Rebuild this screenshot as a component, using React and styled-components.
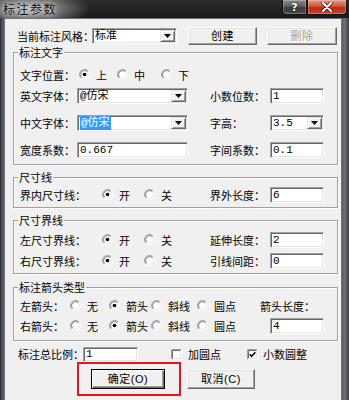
import React from "react";
import styled, { createGlobalStyle } from "styled-components";

const Global = createGlobalStyle`
  html, body { margin: 0; padding: 0; background: #f0f0f0; }
  body { font-family: "Noto Sans CJK SC", "Noto Sans", sans-serif; }
  #root { width: 349px; height: 400px; }
  * { box-sizing: border-box; }
`;

const Window = styled.div`
  width: 349px;
  height: 400px;
  overflow: hidden;
  display: flex;
  flex-direction: column;
  font-family: "Noto Sans CJK SC", sans-serif;
  font-size: 11px;
  color: #000;
  background: #3b3e44;
`;

const TitleBar = styled.div`
  height: 18px;
  flex: none;
  display: flex;
  align-items: flex-start;
  background:
    radial-gradient(ellipse 62px 20px at 28px 9px, rgba(200,200,200,0.95) 0%, rgba(150,150,150,0.7) 50%, rgba(40,40,40,0) 100%),
    linear-gradient(180deg, #2c2c2c, #1b1b1b);
`;

const Title = styled.div`
  padding: 1px 0 0 3px;
  font-size: 12px;
  line-height: 16px;
  letter-spacing: 1.5px;
  color: #0d0d0d;
  text-shadow: 0 0 3px #e0e0e0, 0 0 6px #cfcfcf;
`;

const CaptionButtons = styled.div`
  margin-left: auto;
  margin-right: 2px;
  display: flex;
`;

const CapBtn = styled.div`
  width: ${(p) => p.$w}px;
  height: 15px;
  display: flex;
  align-items: center;
  justify-content: center;
  color: #fff;
  font-family: "DejaVu Sans", sans-serif;
  font-weight: bold;
  font-size: 11px;
  border: 1px solid #111;
  border-top: none;
  box-shadow: inset 0 0 0 1px rgba(255,255,255,0.25);
  background: ${(p) =>
    p.$close
      ? "linear-gradient(180deg, #e49a88 0%, #d0533c 45%, #b72c17 55%, #c8442c 100%)"
      : "linear-gradient(180deg, #8c8c8c 0%, #5c5c5c 45%, #3a3a3a 55%, #4a4a4a 100%)"};
  border-radius: ${(p) => (p.$close ? "0 0 4px 0" : "0 0 0 4px")};
  text-shadow: 0 0 2px #000;
`;

const Frame = styled.div`
  flex: 1;
  display: flex;
  min-height: 0;
  padding: 0 7px 0 4px;
  background: linear-gradient(90deg, #2c2f33 0, #5a5f66 3px, #5a5f66 calc(100% - 7px), #6b7077 calc(100% - 4px), #3a3d42 100%);
`;

const Body = styled.div`
  flex: 1;
  background: #f0f0f0;
  border-top: 1px solid #6e737a;
  border-left: 1px solid #6e737a;
  border-right: 1px solid #6e737a;
  padding: 8px 3px 0 8px;
  display: flex;
  flex-direction: column;
`;

const Row = styled.div`
  display: flex;
  align-items: center;
  height: ${(p) => p.$h || 17}px;
  margin-top: ${(p) => p.$mt || 0}px;
  padding-left: ${(p) => p.$pl || 0}px;
  flex: none;
`;

const Label = styled.div`
  width: ${(p) => p.$w}px;
  flex: none;
  white-space: nowrap;
  line-height: 12px;
  margin-left: ${(p) => (p.$auto ? "auto" : "0")};
`;

const sunken = `
  background: #fff;
  border: 1px solid;
  border-color: #a0a0a0 #fff #fff #a0a0a0;
  box-shadow: inset 1px 1px 0 #696969, inset -1px -1px 0 #e3e3e3;
`;

const Field = styled.div`
  ${sunken}
  width: ${(p) => p.$w}px;
  height: ${(p) => p.$h || 16}px;
  flex: none;
  display: flex;
  align-items: center;
  padding: 0 2px 0 2px;
  margin-left: ${(p) => (p.$auto ? "auto" : p.$ml ? p.$ml + "px" : "0")};
  font-family: "Liberation Mono", "Noto Sans CJK SC", monospace;
  font-size: 11px;
  line-height: 12px;
  white-space: nowrap;
  overflow: hidden;
`;

const SelectField = styled(Field)`
  padding-right: 0;
`;

const Value = styled.span`
  flex: 1;
  min-width: 0;
`;

const Highlight = styled.span`
  background: #3399ff;
  color: #fff;
  padding: 1px 1px;
`;

const DropBtn = styled.div`
  width: 15px;
  height: 12px;
  margin-right: 1px;
  flex: none;
  display: flex;
  align-items: center;
  justify-content: center;
  background: #f0f0f0;
  border: 1px solid;
  border-color: #e3e3e3 #696969 #696969 #e3e3e3;
  box-shadow: inset 1px 1px 0 #fff, inset -1px -1px 0 #a0a0a0;
`;

const Button = styled.div`
  width: ${(p) => p.$w}px;
  height: ${(p) => p.$h || 18}px;
  flex: none;
  margin-left: ${(p) => p.$ml || 0}px;
  display: flex;
  align-items: center;
  justify-content: center;
  background: #f0f0f0;
  border: 1px solid;
  border-color: ${(p) => (p.$default ? "#000" : "#fff #696969 #696969 #fff")};
  box-shadow: ${(p) =>
    p.$default
      ? "inset 1px 1px 0 #fff, inset -1px -1px 0 #696969, inset -2px -2px 0 #a0a0a0"
      : "inset -1px -1px 0 #a0a0a0, inset 1px 1px 0 #e3e3e3"};
  color: ${(p) => (p.$disabled ? "#a0a0a0" : "#000")};
  text-shadow: ${(p) => (p.$disabled ? "1px 1px 0 #fff" : "none")};
  font-family: "Liberation Sans", "Noto Sans CJK SC", sans-serif;
  font-size: 11px;
  line-height: 12px;
  letter-spacing: 0.5px;
`;

const Group = styled.fieldset`
  margin: ${(p) => p.$mt}px 0 0 0;
  padding: ${(p) => p.$pt}px 13px ${(p) => p.$pb}px 6px;
  border: 1px solid #a0a0a0;
  box-shadow: 1px 1px 0 #fff, inset 1px 1px 0 #fff;
  min-width: 0;
  flex: none;
`;

const Legend = styled.legend`
  padding: 0 1px;
  margin-left: -2px;
  font-size: 11px;
  line-height: 12px;
  background: #f0f0f0;
`;

const Choice = styled.label`
  width: ${(p) => (p.$w ? p.$w + "px" : "auto")};
  flex: none;
  display: flex;
  align-items: center;
  gap: ${(p) => p.$gap || 6}px;
  line-height: 12px;
  white-space: nowrap;
`;

const Boxed = styled.div`
  margin-left: ${(p) => p.$ml}px;
  width: 104px;
  height: 34px;
  border: 2px solid #e8141c;
  padding: 5px 0 0 12px;
  flex: none;
`;

function RadioIcon({ on }) {
  return (
    <svg width="11" height="11" viewBox="0 0 12 12">
      <circle cx="6" cy="6" r="5" fill="#fff" />
      <path d="M2.11 9.89 A5.5 5.5 0 0 1 9.89 2.11" fill="none" stroke="#a0a0a0" strokeWidth="1" />
      <path d="M2.82 9.18 A4.5 4.5 0 0 1 9.18 2.82" fill="none" stroke="#696969" strokeWidth="1" />
      <path d="M9.89 2.11 A5.5 5.5 0 0 1 2.11 9.89" fill="none" stroke="#ffffff" strokeWidth="1" />
      <path d="M9.18 2.82 A4.5 4.5 0 0 1 2.82 9.18" fill="none" stroke="#e3e3e3" strokeWidth="1" />
      {on && <circle cx="6" cy="6" r="2" fill="#000" />}
    </svg>
  );
}

function CheckIcon({ on }) {
  return (
    <svg width="11" height="11" viewBox="0 0 11 11">
      <rect x="0" y="0" width="11" height="11" fill="#fff" />
      <path d="M0.5 10.5 V0.5 H10.5" fill="none" stroke="#a0a0a0" />
      <path d="M1.5 9.5 V1.5 H9.5" fill="none" stroke="#696969" />
      <path d="M10.5 0.5 V10.5 H0.5" fill="none" stroke="#fff" />
      <path d="M9.5 1.5 V9.5 H1.5" fill="none" stroke="#e3e3e3" />
      {on && <path d="M2.8 5.2 L4.6 7.2 L8.3 3.2" fill="none" stroke="#000" strokeWidth="1.6" />}
    </svg>
  );
}

function Arrow() {
  return (
    <svg width="7" height="4" viewBox="0 0 7 4">
      <path d="M0 0 H7 L3.5 4 Z" fill="#000" />
    </svg>
  );
}

function CloseGlyph() {
  return (
    <svg width="12" height="10" viewBox="0 0 12 10">
      <path d="M2 1 L10 9 M10 1 L2 9" stroke="#3a0a05" strokeWidth="3.2" strokeLinecap="round" />
      <path d="M2 1 L10 9 M10 1 L2 9" stroke="#fff" strokeWidth="2" strokeLinecap="round" />
    </svg>
  );
}

const Radio = ({ w, on, children }) => (
  <Choice $w={w}>
    <RadioIcon on={on} />
    <span>{children}</span>
  </Choice>
);

const Check = ({ w, on, children, gap }) => (
  <Choice $w={w} $gap={gap}>
    <CheckIcon on={on} />
    <span>{children}</span>
  </Choice>
);

const Select = ({ w, children }) => (
  <SelectField $w={w}>
    <Value>{children}</Value>
    <DropBtn>
      <Arrow />
    </DropBtn>
  </SelectField>
);

export default function App() {
  return (
    <>
      <Global />
      <Window>
        <TitleBar>
          <Title>标注参数</Title>
          <CaptionButtons>
            <CapBtn $w={25}>?</CapBtn>
            <CapBtn $w={40} $close>
              <CloseGlyph />
            </CapBtn>
          </CaptionButtons>
        </TitleBar>
        <Frame>
          <Body>
            <Row $h={18} $pl={4}>
              <Label $w={75}>当前标注风格：</Label>
              <Select w={85}>标准</Select>
              <Button $w={69} $ml={11}>创建</Button>
              <Button $w={70} $ml={10} $disabled>删除</Button>
            </Row>

            <Group $mt={1} $pt={8} $pb={6}>
              <Legend>标注文字</Legend>
              <Row>
                <Label $w={59}>文字位置：</Label>
                <Radio w={38} on>上</Radio>
                <Radio w={44}>中</Radio>
                <Radio>下</Radio>
              </Row>
              <Row $mt={4}>
                <Label $w={57}>英文字体：</Label>
                <Select w={111}>@仿宋</Select>
                <Label $w={60} $auto>小数位数：</Label>
                <Field $w={54}>1</Field>
              </Row>
              <Row $mt={10}>
                <Label $w={57}>中文字体：</Label>
                <Select w={111}>
                  <Highlight>@仿宋</Highlight>
                </Select>
                <Label $w={60} $auto>字高：</Label>
                <Select w={54}>3.5</Select>
              </Row>
              <Row $mt={10}>
                <Label $w={57}>宽度系数：</Label>
                <Field $w={111}>0.667</Field>
                <Label $w={60} $auto>字间系数：</Label>
                <Field $w={54}>0.1</Field>
              </Row>
            </Group>

            <Group $mt={6} $pt={3} $pb={4}>
              <Legend>尺寸线</Legend>
              <Row>
                <Label $w={82}>界内尺寸线：</Label>
                <Radio w={42} on>开</Radio>
                <Radio>关</Radio>
                <Label $w={60} $auto>界外长度：</Label>
                <Field $w={54}>6</Field>
              </Row>
            </Group>

            <Group $mt={6} $pt={5} $pb={4}>
              <Legend>尺寸界线</Legend>
              <Row>
                <Label $w={82}>左尺寸界线：</Label>
                <Radio w={42} on>开</Radio>
                <Radio>关</Radio>
                <Label $w={60} $auto>延伸长度：</Label>
                <Field $w={54}>2</Field>
              </Row>
              <Row $mt={4}>
                <Label $w={82}>右尺寸界线：</Label>
                <Radio w={42} on>开</Radio>
                <Radio>关</Radio>
                <Label $w={60} $auto>引线间距：</Label>
                <Field $w={54}>0</Field>
              </Row>
            </Group>

            <Group $mt={7} $pt={4} $pb={6}>
              <Legend>标注箭头类型</Legend>
              <Row>
                <Label $w={50}>左箭头：</Label>
                <Radio w={39}>无</Radio>
                <Radio w={42} on>箭头</Radio>
                <Radio w={46}>斜线</Radio>
                <Radio>圆点</Radio>
                <Label $w={64} $auto>箭头长度：</Label>
              </Row>
              <Row $mt={3}>
                <Label $w={50}>右箭头：</Label>
                <Radio w={39}>无</Radio>
                <Radio w={42} on>箭头</Radio>
                <Radio w={46}>斜线</Radio>
                <Radio>圆点</Radio>
                <Field $w={54} $auto>4</Field>
              </Row>
            </Group>

            <Row $h={16} $mt={5} $pl={5}>
              <Label $w={65}>标注总比例：</Label>
              <Field $w={55} $h={15}>1</Field>
              <Label $w={33} />
              <Check w={76}>加圆点</Check>
              <Check on gap={5}>小数圆整</Check>
            </Row>

            <Row $h={34}>
              <Boxed $ml={64}>
                <Button $w={74} $h={20} $default>确定(O)</Button>
              </Boxed>
              <Button $w={68} $h={20} $ml={6}>取消(C)</Button>
            </Row>
          </Body>
        </Frame>
      </Window>
    </>
  );
}
